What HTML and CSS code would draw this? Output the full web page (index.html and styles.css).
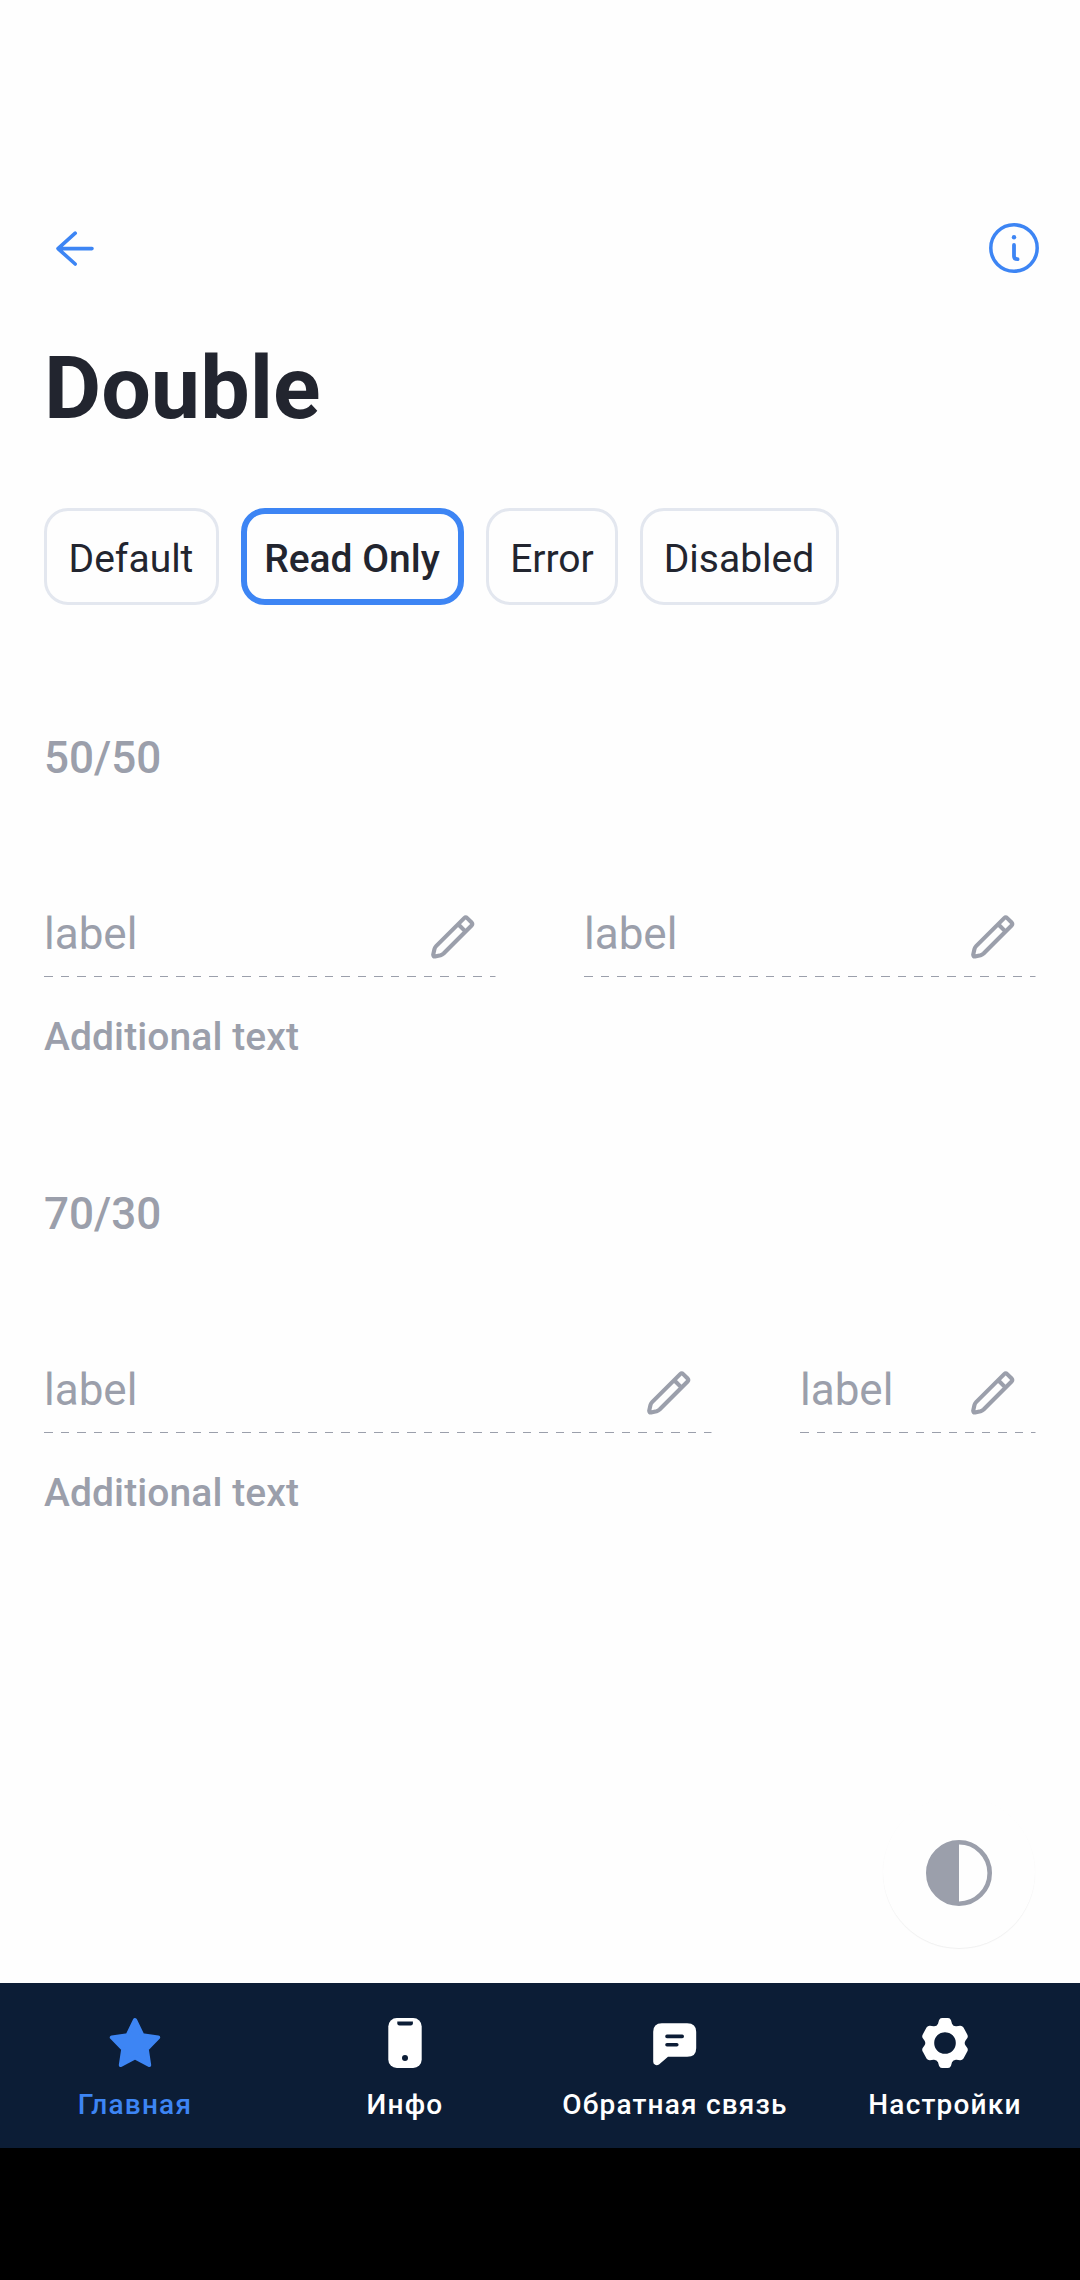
FILE: index.html
```html
<!DOCTYPE html>
<html lang="ru">
<head>
<meta charset="utf-8">
<title>Double</title>
<link rel="stylesheet" href="styles.css">
</head>
<body>
<svg class="sprite" aria-hidden="true">
  <symbol id="pencil" viewBox="0 0 44 44">
    <g fill="none" stroke="currentColor" stroke-width="4.1" stroke-linejoin="round">
      <path d="M33.2 3.1Q34.7 1.6 36.2 3.1L40.6 7.5Q42.1 9 40.6 10.5L12.6 38.5Q11.3 39.7 9.6 40.2L4 41.4Q2.2 41.6 2.2 39.8L3.4 34.2Q3.8 32.4 5.1 31.1Z"/>
      <path d="M27.2 9.2L34.6 16.6"/>
    </g>
  </symbol>
</svg>
<div class="screen">
  <header class="topbar">
    <svg class="back" viewBox="0 0 38 36"><path d="M19.2 2.2L2 17.6L19.2 33M2 17.6H36" fill="none" stroke="currentColor" stroke-width="3.6" stroke-linecap="round" stroke-linejoin="round"/></svg>
    <svg class="info" viewBox="0 0 50 50"><circle cx="25" cy="25" r="23.2" fill="none" stroke="currentColor" stroke-width="3.5"/><circle cx="25" cy="14.3" r="2.2" fill="currentColor"/><path d="M25 22V33.2Q25 36.2 28.6 36.2" fill="none" stroke="currentColor" stroke-width="3.8" stroke-linecap="round"/></svg>
  </header>
  <h1 class="title">Double</h1>
  <nav class="chips">
    <span class="chip chip-default">Default</span>
    <span class="chip chip-readonly selected">Read Only</span>
    <span class="chip chip-error">Error</span>
    <span class="chip chip-disabled">Disabled</span>
  </nav>
  <section class="group">
    <h2 class="ratio">50/50</h2>
    <div class="fields half">
      <div class="field"><span>label</span><svg class="pencil"><use href="#pencil"/></svg></div>
      <div class="field"><span>label</span><svg class="pencil"><use href="#pencil"/></svg></div>
    </div>
    <p class="hint">Additional text</p>
  </section>
  <section class="group">
    <h2 class="ratio">70/30</h2>
    <div class="fields wide">
      <div class="field"><span>label</span><svg class="pencil"><use href="#pencil"/></svg></div>
      <div class="field"><span>label</span><svg class="pencil"><use href="#pencil"/></svg></div>
    </div>
    <p class="hint">Additional text</p>
  </section>
  <div class="fab"><svg viewBox="0 0 66 66"><circle cx="33" cy="33" r="30.7" fill="none" stroke="currentColor" stroke-width="4.6"/><path d="M33 1A32 32 0 0 0 33 65Z" fill="currentColor"/></svg></div>
  <footer class="tabs">
    <div class="tab active">
      <svg viewBox="0 0 54 54"><path d="M27 4L34.4 19.2L50.2 21.4L38.8 33L41.2 49L27 41.6L12.8 49L15.2 33L3.8 21.4L19.6 19.2Z" fill="currentColor" stroke="currentColor" stroke-width="4" stroke-linejoin="round"/></svg>
      <span>Главная</span>
    </div>
    <div class="tab">
      <svg viewBox="0 0 54 54"><rect x="10.3" y="2" width="33.4" height="50" rx="8.5" fill="currentColor"/><path class="cut" d="M19.3 5.5H34.9V7.3Q34.9 9.5 32.7 9.5H21.5Q19.3 9.5 19.3 7.3Z"/><circle class="cut" cx="27" cy="42" r="3"/></svg>
      <span>Инфо</span>
    </div>
    <div class="tab">
      <svg viewBox="0 0 54 54"><path d="M5.2 15.8Q5.2 7.2 13.8 7.2H39.2Q48.2 7.2 48.2 15.8V32.2Q48.2 40.8 39.2 40.8H20L11 48.4Q8.8 49.8 6.8 48.6Q5.2 47.8 5.2 45.5Z" fill="currentColor"/><path class="cut-line" d="M19 20.4H34.2M19 28.7H28.8"/></svg>
      <span>Обратная связь</span>
    </div>
    <div class="tab">
      <svg viewBox="0 0 54 54"><path fill="currentColor" fill-rule="evenodd" d="M24 2H30Q32.2 2 33 4.2L34 7.7Q35.2 10.5 38.5 10.2L42 9.7Q44.2 9.5 45.5 11.5L49 18Q50.6 20.5 49 22.5L47.4 24.7Q46 27 47.4 29.3L49 31.5Q50.6 33.5 49 36L45.5 42.5Q44.2 44.5 42 44.3L38.5 43.8Q35.2 43.5 34 46.3L33 49.8Q32.2 52 30 52H24Q21.8 52 21 49.8L20 46.3Q18.8 43.5 15.5 43.8L12 44.3Q9.8 44.5 8.5 42.5L5 36Q3.4 33.5 5 31.5L6.6 29.3Q8 27 6.6 24.7L5 22.5Q3.4 20.5 5 18L8.5 11.5Q9.8 9.5 12 9.7L15.5 10.2Q18.8 10.5 20 7.7L21 4.2Q21.8 2 24 2ZM27 16.2A10.8 10.8 0 1 0 27 37.8A10.8 10.8 0 1 0 27 16.2Z"/></svg>
      <span>Настройки</span>
    </div>
  </footer>
</div>
</body>
</html>
```
FILE: styles.css
```css
* { box-sizing: border-box; }
body { margin: 0; background: #000; font-family: Roboto, "Liberation Sans", sans-serif; }
.sprite { display: none; }
.screen {
  position: relative;
  display: flex;
  flex-direction: column;
  width: 1080px;
  height: 2148px;
  padding-top: 214px;
  background: #fefefe;
}
.topbar {
  display: flex;
  align-items: center;
  justify-content: space-between;
  height: 68px;
  padding: 0 41px 0 56px;
  color: #3d85f4;
}
.back { width: 38px; height: 36px; margin-top: 2px; }
.info { width: 50px; height: 50px; }
.title {
  margin: 54px 0 0 44px;
  font-size: 88px;
  line-height: 104px;
  font-weight: 700;
  color: #22252f;
}
.chips { display: flex; gap: 22px; margin: 68px 0 0 44px; }
.chip {
  display: flex;
  align-items: center;
  justify-content: center;
  height: 97px;
  padding: 6px 1px 0 0;
  border: 3px solid #e3e7ef;
  border-radius: 24px;
  font-size: 39px;
  line-height: 45px;
  color: #22252f;
  white-space: nowrap;
}
.chip.selected { border: 6px solid #3d85f4; font-weight: 500; }
.chip-default { width: 175px; }
.chip-readonly { width: 223px; }
.chip-error { width: 132px; padding-right: 0; }
.chip-disabled { width: 199px; }
.group { height: 456px; padding: 0 44px; color: #9b9fab; }
.chips + .group { margin-top: 127px; }
.ratio { margin: 0; font-size: 44px; line-height: 52px; font-weight: 500; }
.fields { display: grid; gap: 88px; margin-top: 114px; }
.fields.half { grid-template-columns: 452px 452px; }
.fields.wide { grid-template-columns: 668px 236px; }
.field {
  display: flex;
  justify-content: space-between;
  height: 79px;
  padding: 10px 21px 0 0;
  font-size: 44px;
  line-height: 52px;
  background: repeating-linear-gradient(90deg, transparent 0 0.3px, #9b9fab 0.3px 8.6px, transparent 8.6px 16.5px) left bottom / calc(100% - 0.5px) 1px no-repeat;
}
.pencil { width: 44px; height: 44px; margin-top: 7px; }
.hint {
  margin: 38px 0 0;
  font-size: 39px;
  line-height: 45px;
  font-weight: 500;
  letter-spacing: 0.1px;
}
.fab {
  position: absolute;
  left: 883px;
  top: 1796px;
  display: flex;
  align-items: center;
  justify-content: center;
  width: 152px;
  height: 152px;
  padding-top: 2px;
  border-radius: 50%;
  background: #fefefe;
  box-shadow: 0 1px 1px #f0f0f0;
  color: #9b9fab;
}
.fab svg { width: 66px; height: 66px; }
.tabs {
  display: grid;
  grid-template-columns: repeat(4, 1fr);
  height: 165px;
  margin-top: auto;
  background: #0c1d36;
}
.tab {
  display: flex;
  flex-direction: column;
  align-items: center;
  padding-top: 33px;
  color: #fff;
  font-size: 28px;
  line-height: 32px;
  font-weight: 500;
  letter-spacing: 1.2px;
  white-space: nowrap;
}
.tab svg { width: 54px; height: 54px; margin-bottom: 19px; }
.tab.active { color: #3d85f4; }
.cut { fill: #0c1d36; }
.cut-line { fill: none; stroke: #0c1d36; stroke-width: 3.6; stroke-linecap: round; }
```
